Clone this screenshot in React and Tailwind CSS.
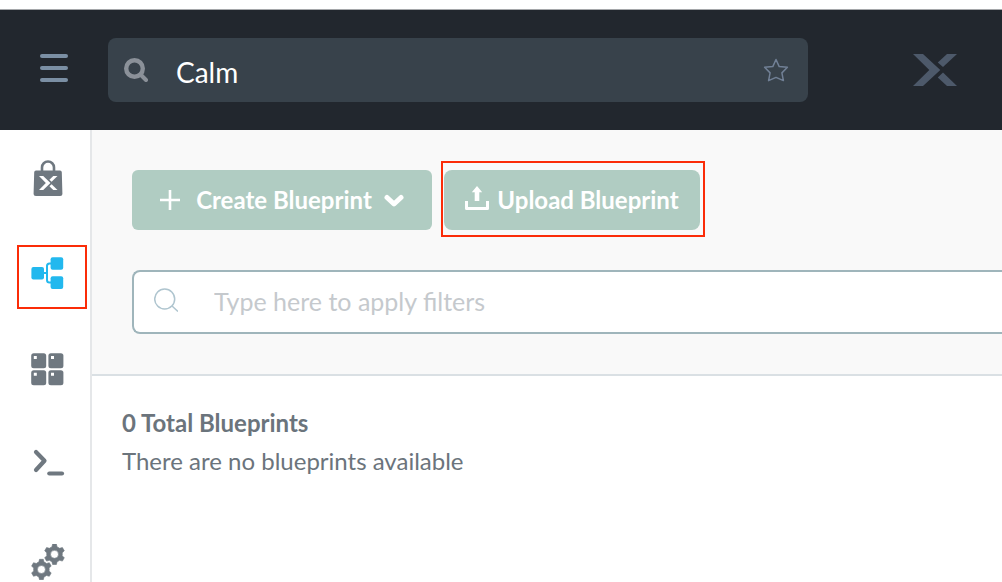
import React from "react";

const LogoMark = (props) => (
  <svg viewBox="0 0 44 32" fill="currentColor" aria-hidden="true" {...props}>
    <path d="M0 0H10L27.3 16L10 32H0L16.3 16Z" />
    <path d="M34 0H44L30 13L24.8 8.5Z" />
    <path d="M24.8 23.5L30 18.6L44 32H34Z" />
  </svg>
);

const MarketIcon = () => (
  <svg viewBox="0 0 36 36" className="size-9" aria-hidden="true">
    <path d="M12 12V7.500a6 6 0 0 1 12 0V12" fill="none" stroke="#6f7880" strokeWidth="2.600" />
    <path d="M6 10.500H30a1.800 1.800 0 0 1 1.800 1.700L32.400 33.500a2.300 2.300 0 0 1-2.300 2.500H5.900a2.300 2.300 0 0 1-2.300-2.500L4.200 12.200A1.800 1.800 0 0 1 6 10.500Z" fill="#6f7880" />
    <g transform="translate(9 16) scale(.42 .44)" fill="#fff">
      <path d="M0 0H10L27.300 16L10 32H0L16.300 16Z" />
      <path d="M34 0H44L30 13L24.800 8.500Z" />
      <path d="M24.800 23.500L30 18.600L44 32H34Z" />
    </g>
  </svg>
);

const BlueprintIcon = () => (
  <svg viewBox="0 0 36 36" className="size-9" aria-hidden="true">
    <path d="M12 18H17M22 8.500H19.500a2.500 2.500 0 0 0-2.500 2.500V25a2.500 2.500 0 0 0 2.500 2.500H22" fill="none" stroke="#22b8ee" strokeWidth="2" />
    <g fill="#22b8ee">
      <rect x="1.400" y="11.900" width="12.600" height="12.600" rx="2" />
      <rect x="20.600" y="2.200" width="12.600" height="12.600" rx="2" />
      <rect x="20.600" y="21.300" width="12.600" height="12.600" rx="2" />
    </g>
  </svg>
);

const AppsIcon = () => (
  <svg viewBox="0 0 36 36" className="size-9" aria-hidden="true">
    <g fill="#6f7880">
      <rect x="1.200" y="3.200" width="15" height="15" rx="2.500" />
      <rect x="18.400" y="3.200" width="15" height="15" rx="2.500" />
      <rect x="1.200" y="20.200" width="15" height="15" rx="2.500" />
      <rect x="18.400" y="20.200" width="15" height="15" rx="2.500" />
    </g>
    <path d="M3.800 6h3v3h-3zM21 6h3v3h-3zM3.800 22.800h3v3h-3zM21 22.800h3v3h-3z" fill="#fff" />
  </svg>
);

const TerminalIcon = () => (
  <svg viewBox="0 0 36 36" className="size-9" fill="none" stroke="#6f7880" strokeWidth="4.200" strokeLinecap="round" strokeLinejoin="round" aria-hidden="true">
    <path d="M6 7L14.500 15.800L6 25" />
    <path d="M19.300 28.500H32" />
  </svg>
);

const GEAR =
  "M-1.900-10.200H1.900L2.600-7.400A7.800 7.800 0 0 1 5.100-6L7.900-6.800L9.800-3.500L7.700-1.400A7.800 7.800 0 0 1 7.700 1.400L9.800 3.500L7.900 6.800L5.100 6A7.800 7.800 0 0 1 2.600 7.400L1.900 10.200H-1.900L-2.600 7.400A7.800 7.800 0 0 1-5.100 6L-7.900 6.800L-9.800 3.500L-7.700 1.400A7.800 7.800 0 0 1-7.700-1.400L-9.800-3.500L-7.900-6.800L-5.100-6A7.800 7.800 0 0 1-2.600-7.400ZM0-4A4 4 0 1 0 0 4A4 4 0 1 0 0-4Z";

const SettingsIcon = () => (
  <svg viewBox="0 0 36 36" className="size-9" fill="#6f7880" fillRule="evenodd" stroke="#6f7880" strokeWidth=".6" strokeLinejoin="round" aria-hidden="true">
    <path d={GEAR} transform="translate(24.500 10.300)" />
    <path d={GEAR} transform="translate(11.400 25.500)" />
  </svg>
);

const navItems = [
  { label: "Marketplace", Icon: MarketIcon, box: "border-transparent pb-2" },
  { label: "Blueprints", Icon: BlueprintIcon, box: "border-[#fb2c08] pb-2" },
  { label: "Applications", Icon: AppsIcon, box: "border-transparent pb-2" },
  { label: "Runbooks", Icon: TerminalIcon, box: "border-transparent pb-2" },
  { label: "Settings", Icon: SettingsIcon, box: "border-transparent" },
];

function Header() {
  return (
    <header className="flex h-[121px] shrink-0 items-center border-t border-[#a5a7aa] bg-[#22272e] pr-[45px] pl-10">
      <button type="button" aria-label="Menu" className="flex w-7 flex-col gap-2 pb-1">
        <span className="h-1 rounded-full bg-[#7b8fa4]" />
        <span className="h-1 rounded-full bg-[#7b8fa4]" />
        <span className="h-1 rounded-full bg-[#7b8fa4]" />
      </button>
      <div className="ml-10 flex h-16 max-w-[700px] grow items-center rounded-lg bg-[#38424b] pr-[19px] pl-4">
        <svg viewBox="0 0 24 24" className="size-6 shrink-0" fill="none" stroke="#8b9199" strokeLinecap="round" aria-hidden="true">
          <circle cx="10.500" cy="10.500" r="8.300" strokeWidth="4.400" />
          <path d="M17.500 17.500L22 22" strokeWidth="4" />
        </svg>
        <input
          type="text"
          aria-label="Search"
          defaultValue="Calm"
          className="ml-7 min-w-0 grow bg-transparent pt-1 text-[28px] leading-9 text-white outline-none"
        />
        <button type="button" aria-label="Favorite" className="shrink-0">
          <svg viewBox="0 0 26 26" className="size-[26px]" fill="none" stroke="#718096" strokeWidth="1.500" strokeLinejoin="round" aria-hidden="true">
            <path d="M13 2.500L16.200 9.600L24.400 10.300L18.900 15.900L20.400 23.600L13 20.400L5.600 23.600L7.100 15.900L1.600 10.300L9.800 9.600Z" />
          </svg>
        </button>
      </div>
      <a href="#home" aria-label="Home" className="ml-auto text-[#4d596a]">
        <LogoMark className="h-8 w-11" />
      </a>
    </header>
  );
}

function Sidebar() {
  return (
    <nav className="flex w-[92px] shrink-0 flex-col items-end gap-[31px] border-r-2 border-[#e5e7e9] pt-5 pr-[3px]">
      {navItems.map(({ label, Icon, box }) => (
        <a key={label} href={`#${label.toLowerCase()}`} aria-label={label} className={`flex h-16 w-[70px] shrink-0 items-center border-2 pl-[11px] ${box}`}>
          <Icon />
        </a>
      ))}
    </nav>
  );
}

function Toolbar() {
  return (
    <section className="border-b-2 border-[#dae0e4] bg-[#f9f9f9] pt-[31px] pb-10 pl-10">
      <div className="flex items-baseline gap-[9px]">
        <button type="button" className="flex h-[60px] w-[300px] items-center justify-center rounded-md bg-[#b0ccc2] text-2xl font-bold text-white">
          <svg viewBox="0 0 20 20" className="mr-4 size-5" stroke="currentColor" strokeWidth="2.600" aria-hidden="true">
            <path d="M10 0V20M0 10H20" />
          </svg>
          Create Blueprint
          <svg viewBox="0 0 20 14" className="ml-3 h-3.5 w-5" fill="none" stroke="currentColor" strokeWidth="5" strokeLinecap="round" strokeLinejoin="round" aria-hidden="true">
            <path d="M3 4.500L10 11L17 4.500" />
          </svg>
        </button>
        <div className="border-2 border-[#fb2c08] pt-[7px] pr-[3px] pb-[5px] pl-px">
          <button type="button" className="flex h-[60px] w-64 items-center justify-center rounded-lg bg-[#b0ccc2] text-2xl font-bold text-white">
            <svg viewBox="0 0 24 24" className="mr-2 mb-1 size-6" fill="currentColor" aria-hidden="true">
              <path d="M12 0L17.200 6.300H14.300V15H9.700V6.300H6.800Z" />
              <path d="M0 15H3V21H21V15H24V22.500a1.500 1.500 0 0 1-1.500 1.500H1.500A1.500 1.500 0 0 1 0 22.500Z" />
            </svg>
            Upload Blueprint
          </button>
        </div>
      </div>
      <div className="mt-[33px] flex h-16 items-center rounded-l-lg border-2 border-r-0 border-[#9fb5bb] bg-white pl-5">
        <svg viewBox="0 0 24 24" className="mb-1 size-6 shrink-0" fill="none" stroke="#afc5cf" strokeWidth="1.500" aria-hidden="true">
          <circle cx="10.700" cy="11" r="10" />
          <path d="M18 18L24 23.500" />
        </svg>
        <input
          type="text"
          aria-label="Filters"
          placeholder="Type here to apply filters"
          className="ml-9 min-w-0 grow bg-transparent text-[25px] text-[#6b747c] outline-none placeholder:text-[#c5c9cd]"
        />
      </div>
    </section>
  );
}

export default function App() {
  return (
    <div className="flex h-screen flex-col overflow-hidden bg-white pt-[9px] font-['Lato',sans-serif]">
      <Header />
      <div className="flex min-h-0 grow">
        <Sidebar />
        <main className="min-w-0 grow">
          <Toolbar />
          <section className="px-[30px] pt-7 text-[#6b747c]">
            <h1 className="text-2xl leading-[38px] font-bold">0 Total Blueprints</h1>
            <p className="text-2xl leading-[38px]">There are no blueprints available</p>
          </section>
        </main>
      </div>
    </div>
  );
}
